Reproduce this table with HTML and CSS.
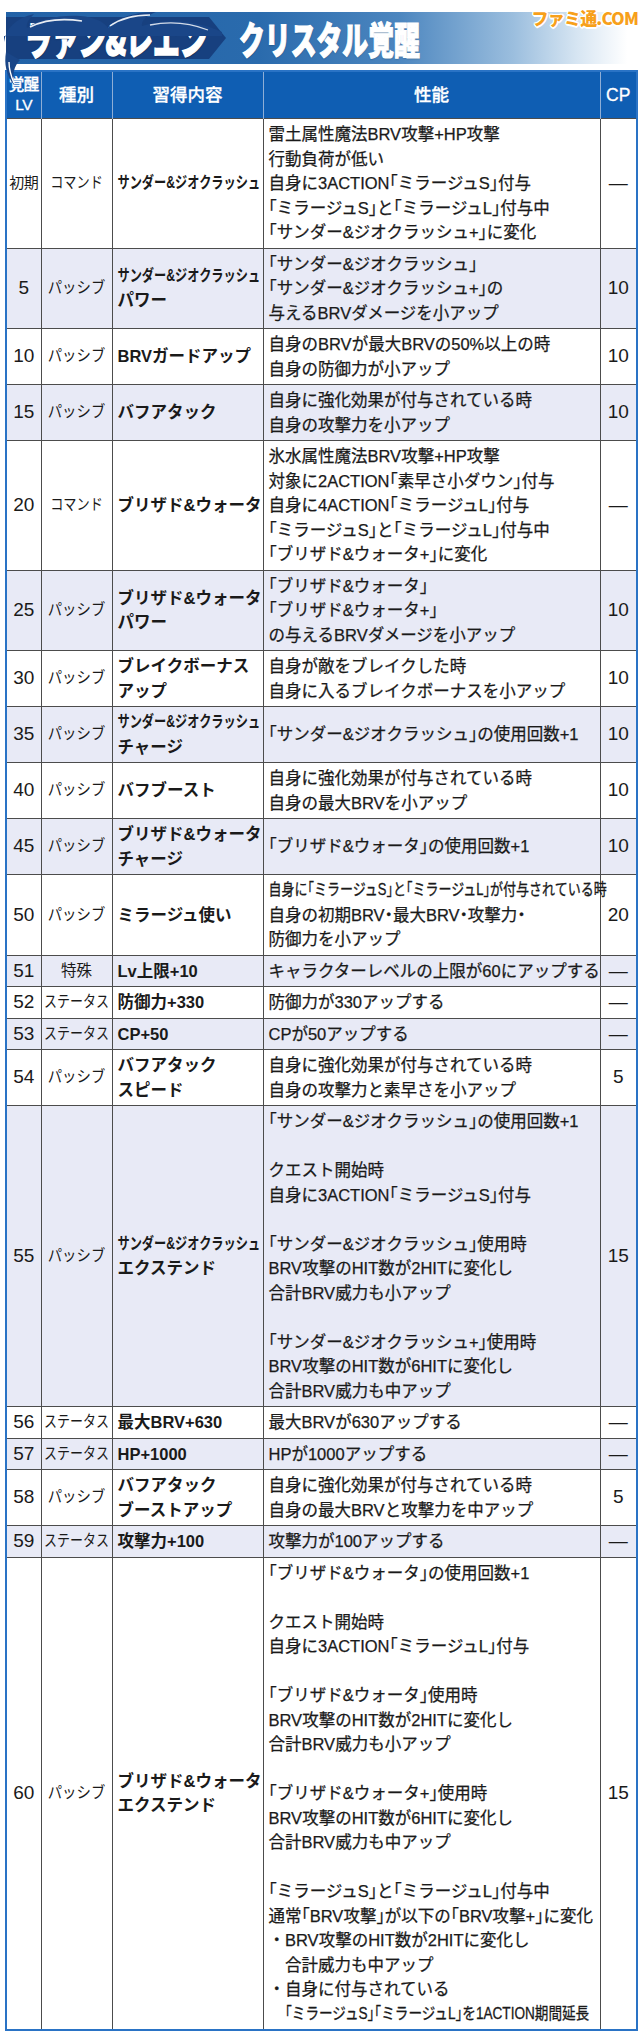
FILE: index.html
```html
<!DOCTYPE html>
<html lang="ja">
<head>
<meta charset="utf-8">
<title>ラァン&amp;レエン クリスタル覚醒</title>
<link rel="stylesheet" href="styles.css">
</head>
<body>
<div class="page">
  <div class="logo">ファミ通.COM</div>
  <header class="banner">
    <div class="hero"><span class="sx hero-text">ラァン&amp;レエン</span></div>
    <h1 class="title"><span class="sx title-text">クリスタル覚醒</span></h1>
  </header>
  <svg class="swoosh" width="240" height="80" viewBox="0 0 240 80" aria-hidden="true">
    <path d="M4,30 C6,16 16,6 34,2 C28,8 26,12 27,16 C40,7 58,3 80,4 C95,5 104,10 108,16 C116,6 134,0 156,0 C146,4 141,9 142,14 C166,6 196,8 222,20 L222,24 L4,24 Z" fill="#1a4688"/>
    <path d="M30,15 C44,8 62,6 82,9" stroke="#ffffff" stroke-width="1.6" fill="none" opacity="0.9"/>
    <path d="M110,14 C121,6 136,3 150,3" stroke="#ffffff" stroke-width="1.5" fill="none" opacity="0.9"/>
    <path d="M150,13 C170,9 190,11 208,18" stroke="#ffffff" stroke-width="1.3" fill="none" opacity="0.8"/>
    <path d="M6,40 C4,52 6,62 14,73 C12,62 14,54 20,48 Z" fill="#1a4688"/>
    <path d="M9,50 C9,58 11,64 14,71" stroke="#ffffff" stroke-width="1.4" fill="none"/>
  </svg>
  <table class="awaken">
    <colgroup>
      <col class="c-lv">
      <col class="c-type">
      <col class="c-name">
      <col class="c-desc">
      <col class="c-cp">
    </colgroup>
    <thead>
      <tr>
        <th class="h-lv">覚醒<br>LV</th>
        <th>種別</th>
        <th>習得内容</th>
        <th>性能</th>
        <th>CP</th>
      </tr>
    </thead>
    <tbody>
      <tr>
        <td class="lv lv-init">初期</td>
        <td class="type"><span class="cx cx-cmd">コマンド</span></td>
        <td class="name"><span class="cx cx-name">サンダー&amp;ジオクラッシュ</span></td>
        <td class="desc">雷土属性魔法BRV攻撃+HP攻撃<br>行動負荷が低い<br>自身に3ACTION「ミラージュS」付与<br>「ミラージュS」と「ミラージュL」付与中<br>「サンダー&amp;ジオクラッシュ+」に変化</td>
        <td class="cp">—</td>
      </tr>
      <tr>
        <td class="lv">5</td>
        <td class="type"><span class="cx cx-pas">パッシブ</span></td>
        <td class="name"><span class="cx cx-name">サンダー&amp;ジオクラッシュ</span><br>パワー</td>
        <td class="desc">「サンダー&amp;ジオクラッシュ」<br>「サンダー&amp;ジオクラッシュ+」の<br>与えるBRVダメージを小アップ</td>
        <td class="cp">10</td>
      </tr>
      <tr>
        <td class="lv">10</td>
        <td class="type"><span class="cx cx-pas">パッシブ</span></td>
        <td class="name">BRVガードアップ</td>
        <td class="desc">自身のBRVが最大BRVの50%以上の時<br>自身の防御力が小アップ</td>
        <td class="cp">10</td>
      </tr>
      <tr>
        <td class="lv">15</td>
        <td class="type"><span class="cx cx-pas">パッシブ</span></td>
        <td class="name">バフアタック</td>
        <td class="desc">自身に強化効果が付与されている時<br>自身の攻撃力を小アップ</td>
        <td class="cp">10</td>
      </tr>
      <tr>
        <td class="lv">20</td>
        <td class="type"><span class="cx cx-cmd">コマンド</span></td>
        <td class="name">ブリザド&amp;ウォータ</td>
        <td class="desc">氷水属性魔法BRV攻撃+HP攻撃<br>対象に2ACTION「素早さ小ダウン」付与<br>自身に4ACTION「ミラージュL」付与<br>「ミラージュS」と「ミラージュL」付与中<br>「ブリザド&amp;ウォータ+」に変化</td>
        <td class="cp">—</td>
      </tr>
      <tr>
        <td class="lv">25</td>
        <td class="type"><span class="cx cx-pas">パッシブ</span></td>
        <td class="name">ブリザド&amp;ウォータ<br>パワー</td>
        <td class="desc">「ブリザド&amp;ウォータ」<br>「ブリザド&amp;ウォータ+」<br>の与えるBRVダメージを小アップ</td>
        <td class="cp">10</td>
      </tr>
      <tr>
        <td class="lv">30</td>
        <td class="type"><span class="cx cx-pas">パッシブ</span></td>
        <td class="name">ブレイクボーナス<br>アップ</td>
        <td class="desc">自身が敵をブレイクした時<br>自身に入るブレイクボーナスを小アップ</td>
        <td class="cp">10</td>
      </tr>
      <tr>
        <td class="lv">35</td>
        <td class="type"><span class="cx cx-pas">パッシブ</span></td>
        <td class="name"><span class="cx cx-name">サンダー&amp;ジオクラッシュ</span><br>チャージ</td>
        <td class="desc">「サンダー&amp;ジオクラッシュ」の使用回数+1</td>
        <td class="cp">10</td>
      </tr>
      <tr>
        <td class="lv">40</td>
        <td class="type"><span class="cx cx-pas">パッシブ</span></td>
        <td class="name">バフブースト</td>
        <td class="desc">自身に強化効果が付与されている時<br>自身の最大BRVを小アップ</td>
        <td class="cp">10</td>
      </tr>
      <tr>
        <td class="lv">45</td>
        <td class="type"><span class="cx cx-pas">パッシブ</span></td>
        <td class="name">ブリザド&amp;ウォータ<br>チャージ</td>
        <td class="desc">「ブリザド&amp;ウォータ」の使用回数+1</td>
        <td class="cp">10</td>
      </tr>
      <tr>
        <td class="lv">50</td>
        <td class="type"><span class="cx cx-pas">パッシブ</span></td>
        <td class="name">ミラージュ使い</td>
        <td class="desc"><span class="cx cx-m50">自身に「ミラージュS」と「ミラージュL」が付与されている時</span><br>自身の初期BRV・最大BRV・攻撃力・<br>防御力を小アップ</td>
        <td class="cp">20</td>
      </tr>
      <tr>
        <td class="lv">51</td>
        <td class="type">特殊</td>
        <td class="name">Lv上限+10</td>
        <td class="desc">キャラクターレベルの上限が60にアップする</td>
        <td class="cp">—</td>
      </tr>
      <tr>
        <td class="lv">52</td>
        <td class="type"><span class="cx cx-sta">ステータス</span></td>
        <td class="name">防御力+330</td>
        <td class="desc">防御力が330アップする</td>
        <td class="cp">—</td>
      </tr>
      <tr>
        <td class="lv">53</td>
        <td class="type"><span class="cx cx-sta">ステータス</span></td>
        <td class="name">CP+50</td>
        <td class="desc">CPが50アップする</td>
        <td class="cp">—</td>
      </tr>
      <tr>
        <td class="lv">54</td>
        <td class="type"><span class="cx cx-pas">パッシブ</span></td>
        <td class="name">バフアタック<br>スピード</td>
        <td class="desc">自身に強化効果が付与されている時<br>自身の攻撃力と素早さを小アップ</td>
        <td class="cp">5</td>
      </tr>
      <tr>
        <td class="lv">55</td>
        <td class="type"><span class="cx cx-pas">パッシブ</span></td>
        <td class="name"><span class="cx cx-name">サンダー&amp;ジオクラッシュ</span><br>エクステンド</td>
        <td class="desc">「サンダー&amp;ジオクラッシュ」の使用回数+1<br><br>クエスト開始時<br>自身に3ACTION「ミラージュS」付与<br><br>「サンダー&amp;ジオクラッシュ」使用時<br>BRV攻撃のHIT数が2HITに変化し<br>合計BRV威力も小アップ<br><br>「サンダー&amp;ジオクラッシュ+」使用時<br>BRV攻撃のHIT数が6HITに変化し<br>合計BRV威力も中アップ</td>
        <td class="cp">15</td>
      </tr>
      <tr>
        <td class="lv">56</td>
        <td class="type"><span class="cx cx-sta">ステータス</span></td>
        <td class="name">最大BRV+630</td>
        <td class="desc">最大BRVが630アップする</td>
        <td class="cp">—</td>
      </tr>
      <tr>
        <td class="lv">57</td>
        <td class="type"><span class="cx cx-sta">ステータス</span></td>
        <td class="name">HP+1000</td>
        <td class="desc">HPが1000アップする</td>
        <td class="cp">—</td>
      </tr>
      <tr>
        <td class="lv">58</td>
        <td class="type"><span class="cx cx-pas">パッシブ</span></td>
        <td class="name">バフアタック<br>ブーストアップ</td>
        <td class="desc">自身に強化効果が付与されている時<br>自身の最大BRVと攻撃力を中アップ</td>
        <td class="cp">5</td>
      </tr>
      <tr>
        <td class="lv">59</td>
        <td class="type"><span class="cx cx-sta">ステータス</span></td>
        <td class="name">攻撃力+100</td>
        <td class="desc">攻撃力が100アップする</td>
        <td class="cp">—</td>
      </tr>
      <tr>
        <td class="lv">60</td>
        <td class="type"><span class="cx cx-pas">パッシブ</span></td>
        <td class="name">ブリザド&amp;ウォータ<br>エクステンド</td>
        <td class="desc">「ブリザド&amp;ウォータ」の使用回数+1<br><br>クエスト開始時<br>自身に3ACTION「ミラージュL」付与<br><br>「ブリザド&amp;ウォータ」使用時<br>BRV攻撃のHIT数が2HITに変化し<br>合計BRV威力も小アップ<br><br>「ブリザド&amp;ウォータ+」使用時<br>BRV攻撃のHIT数が6HITに変化し<br>合計BRV威力も中アップ<br><br>「ミラージュS」と「ミラージュL」付与中<br>通常「BRV攻撃」が以下の「BRV攻撃+」に変化
          <div class="bul"><span class="dot">・</span>BRV攻撃のHIT数が2HITに変化し<br>合計威力も中アップ</div>
          <div class="bul"><span class="dot">・</span>自身に付与されている<br><span class="cx cx-m60">「ミラージュS」「ミラージュL」を1ACTION期間延長</span></div>
        </td>
        <td class="cp">15</td>
      </tr>
    </tbody>
  </table>
</div>
</body>
</html>
```

FILE: styles.css
```css
* { box-sizing: border-box; }
html, body { margin: 0; padding: 0; background: #ffffff; }
body {
  font-family: "Liberation Sans", "Noto Sans CJK JP", sans-serif;
  color: #1a1a1a;
}
.page { position: relative; width: 640px; }

/* watermark logo */
.logo {
  position: absolute;
  top: -5px;
  right: 2px;
  z-index: 3;
  font-family: "Noto Sans CJK JP", sans-serif;
  font-weight: 900;
  font-size: 17px;
  line-height: 22px;
  letter-spacing: -0.8px;
  color: #f7a01a;
  text-shadow: 1px 1px 0 #fff, -1px -1px 0 #fff, 1px -1px 0 #fff, -1px 1px 0 #fff,
               0 1.5px 0 #fff, 0 -1.5px 0 #fff, 1.5px 0 0 #fff, -1.5px 0 0 #fff;
}

/* banner */
.banner {
  margin: 12px 0 0 6px;
  height: 52px;
  display: flex;
  align-items: center;
  background: linear-gradient(90deg, #2262a7 0%, #2a6bad 40%, #4c86bf 62%, #9bbede 80%, #d6e5f2 90%, #ffffff 98%);
}
.hero {
  width: 220px;
  height: 42px;
  padding-left: 19px;
  display: flex;
  align-items: center;
  background: #17407f;
  clip-path: polygon(0 0, calc(100% - 17px) 0, 100% 50%, calc(100% - 17px) 100%, 0 100%);
  color: #ffffff;
  font-family: "Noto Sans CJK JP", sans-serif;
  font-weight: 900;
  font-size: 40px;
  line-height: 1;
}
.title {
  margin: 0 0 0 13px;
  color: #ffffff;
  font-family: "Noto Sans CJK JP", sans-serif;
  font-weight: 900;
  font-size: 38px;
  line-height: 1;
}
.sx {
  display: inline-block;
  white-space: nowrap;
  transform-origin: 0 50%;
}
.hero-text {
  transform: scaleX(0.67);
  -webkit-text-stroke: 1.4px #ffffff;
  text-shadow: 0 1px 2px rgba(0, 0, 0, 0.5);
}
.title-text {
  transform: scaleX(0.68);
  -webkit-text-stroke: 1.2px #ffffff;
  text-shadow: 0 1px 2px rgba(0, 0, 0, 0.3);
}
.swoosh { position: absolute; left: 0; top: 0; z-index: 2; }

/* table */
.awaken {
  margin: 6px 0 0 5px;
  width: 631px;
  table-layout: fixed;
  border-collapse: collapse;
  border: 2px solid #2a73c5;
}
.c-lv { width: 35px; }
.c-type { width: 71px; }
.c-name { width: 151px; }
.c-desc { width: 337px; }
.c-cp { width: 37px; }

.awaken th {
  background: #0f5eb3;
  color: #ffffff;
  font-weight: 500;
  font-size: 17.5px;
  line-height: 20px;
  padding: 3px 0;
  border-left: 1px solid #8eaed6;
  border-right: 1px solid #8eaed6;
  text-align: center;
  vertical-align: middle;
  -webkit-text-stroke: 0.3px #ffffff;
}
.awaken th.h-lv { font-size: 15.5px; letter-spacing: -0.5px; }
.awaken td {
  border: 1px solid #4c4c4c;
  padding: 3px 2px;
  line-height: 24.5px;
  vertical-align: middle;
  white-space: nowrap;
}
.awaken tbody tr:nth-child(even) td { background: #e8eaf6; }

.lv { text-align: center; font-size: 19px; }
.awaken td.lv { padding: 3px 0; }
.awaken td.lv-init { font-size: 15px; letter-spacing: -0.5px; }
.type { text-align: center; font-size: 15.5px; }
.name { font-weight: 700; font-size: 16.5px; }
.awaken td.name { padding-left: 5px; }
.desc { font-size: 16.5px; font-feature-settings: "halt"; -webkit-text-stroke: 0.25px #1a1a1a; }
.awaken td.desc { padding-left: 5px; }
.cp { text-align: center; font-size: 19px; }
.awaken td.cp { padding: 3px 0; }

/* condensed text: smaller font stretched back to full height */
.cx {
  display: inline-block;
  vertical-align: top;
  white-space: nowrap;
  text-indent: 0;
  transform-origin: 50% 50%;
}
.cx-name { font-size: 12.2px; transform: scaleY(1.33); }
.cx-cmd { font-size: 13.2px; transform: scaleY(1.17); }
.cx-pas { font-size: 14.4px; transform: scaleY(1.08); }
.cx-sta { font-size: 13px; transform: scaleY(1.19); }
.cx-m50 { font-size: 13px; transform: scaleY(1.25); }
.cx-m60 { font-size: 13.6px; transform: scaleY(1.2); }

.bul {
  padding-left: 1em;
  text-indent: -1em;
}
.dot { font-feature-settings: normal; }
```
